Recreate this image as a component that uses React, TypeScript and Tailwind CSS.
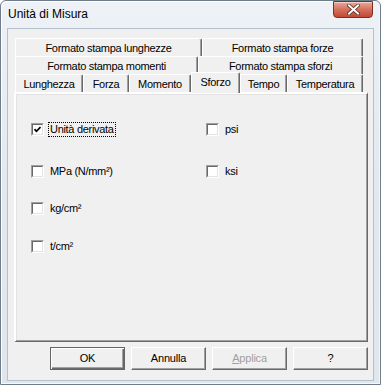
import React from "react";

const font = { fontFamily: '"Liberation Sans", Arial, sans-serif' };

interface TabProps {
  label: string;
  w: string;
  selected?: boolean;
}

function Tab({ label, w, selected }: TabProps) {
  if (selected) {
    return (
      <div
        className={`${w} relative z-10 -mt-[2px] h-[21px] self-start flex justify-center pt-[1px] bg-[#f0f0f0] border-l border-t border-white border-r border-r-[#696969] rounded-tr-[2px] shadow-[inset_-1px_0_0_#a0a0a0]`}
      >
        <span className="text-[11px] leading-[16px] tracking-[-0.3px] text-black">{label}</span>
      </div>
    );
  }
  return (
    <div
      className={`${w} h-full flex items-center justify-center bg-[#f0f0f0] border-l border-t border-white border-r border-r-[#696969] rounded-tr-[2px] shadow-[inset_-1px_0_0_#a0a0a0]`}
    >
      <span className="text-[11px] leading-[14px] tracking-[-0.3px] text-black">{label}</span>
    </div>
  );
}

function CheckBox({ label, checked, focused }: { label: string; checked?: boolean; focused?: boolean }) {
  return (
    <div className="flex items-center h-[13px]">
      <div className="w-[13px] h-[13px] border border-t-[#a0a0a0] border-l-[#a0a0a0] border-b-white border-r-white flex">
        <div className="flex-1 border border-t-[#696969] border-l-[#696969] border-b-[#e3e3e3] border-r-[#e3e3e3] bg-white flex items-center justify-center">
          {checked && (
            <svg width="7" height="7" viewBox="0 0 7 7">
              <path d="M0.5 3.2 L2.5 5.3 L6.5 1" fill="none" stroke="#000" strokeWidth="1.7" />
            </svg>
          )}
        </div>
      </div>
      <span
        className={`ml-[4px] px-[1px] h-[15px] flex items-center text-[11px] tracking-[-0.3px] text-black border border-dotted ${
          focused ? "border-black" : "border-transparent"
        }`}
      >
        {label}
      </span>
    </div>
  );
}

function DlgButton({ children, primary, disabled }: { children: React.ReactNode; primary?: boolean; disabled?: boolean }) {
  return (
    <button
      type="button"
      className={`w-[75px] h-[23px] bg-[#f0f0f0] text-[11px] tracking-[-0.2px] flex items-center justify-center ${
        primary
          ? "border border-[#646464] shadow-[inset_1px_1px_0_#ffffff,inset_-1px_-1px_0_#696969,inset_-2px_-2px_0_#a0a0a0]"
          : "border border-t-white border-l-white border-r-[#696969] border-b-[#696969] shadow-[inset_-1px_-1px_0_#a0a0a0]"
      } ${disabled ? "text-[#a0a0a0]" : "text-black"}`}
    >
      {children}
    </button>
  );
}

export default function App() {
  return (
    <div className="w-[381px] h-[385px] bg-white" style={font}>
      <div className="w-[381px] h-[385px] flex flex-col border border-[#6f7c8a] rounded-t-[6px] bg-gradient-to-b from-[#eef2f6] via-[#e2e8ee] to-[#dfe6ec] shadow-[inset_1px_1px_0_#ffffff,inset_-1px_-1px_0_#f4f8fb]">
        {/* title bar */}
        <div className="h-[27px] flex items-start justify-between pl-[7px] pr-[7px]">
          <span className="mt-[6px] text-[12px] leading-[14px] text-black">Unità di Misura</span>
          <div className="w-[40px] h-[17px] rounded-b-[4px] border border-[#7e2f22] bg-gradient-to-b from-[#e9ab9c] via-[#d4705d] to-[#c4462f] flex items-center justify-center shadow-[inset_0_1px_0_#f4cfc6]">
            <svg width="13" height="11" viewBox="0 0 13 11">
              <path d="M2 1.5 L11 9.5 M11 1.5 L2 9.5" stroke="#5a2a22" strokeWidth="3.6" strokeLinecap="square" />
              <path d="M2 1.5 L11 9.5 M11 1.5 L2 9.5" stroke="#ffffff" strokeWidth="2" strokeLinecap="square" />
            </svg>
          </div>
        </div>

        {/* client area */}
        <div className="flex-1 mx-[6px] mb-[3px] border border-[#b3c0cd] bg-[#f0f0f0] flex flex-col">
          <div className="flex-1 flex flex-col mt-[9px] ml-[6px] mr-[5px]">
            {/* tab rows */}
            <div className="flex h-[18px] ml-px">
              <Tab label="Formato stampa lunghezze" w="w-[187px]" />
              <Tab label="Formato stampa forze" w="w-[161px]" />
            </div>
            <div className="flex h-[18px] ml-px">
              <Tab label="Formato stampa momenti" w="w-[183px]" />
              <Tab label="Formato stampa sforzi" w="w-[165px]" />
            </div>
            <div className="flex h-[18px] ml-px">
              <Tab label="Lunghezza" w="w-[68px]" />
              <Tab label="Forza" w="w-[46px]" />
              <Tab label="Momento" w="w-[62px]" />
              <Tab label="Sforzo" w="w-[49px]" selected />
              <Tab label="Tempo" w="w-[47px]" />
              <Tab label="Temperatura" w="w-[76px]" />
            </div>

            {/* panel */}
            <div className="flex-1 border-l-2 border-t-2 border-l-white border-t-white border-r border-b border-r-[#696969] border-b-[#696969] shadow-[inset_-1px_-1px_0_#a0a0a0,inset_1px_1px_0_#e3e3e3] flex flex-col pl-[15px]">
              <div className="flex mt-[29px]">
                <div className="w-[175px]">
                  <CheckBox label="Unità derivata" checked focused />
                </div>
                <CheckBox label="psi" />
              </div>
              <div className="flex mt-[29px]">
                <div className="w-[175px]">
                  <CheckBox label="MPa (N/mm²)" />
                </div>
                <CheckBox label="ksi" />
              </div>
              <div className="flex mt-[24px]">
                <CheckBox label="kg/cm²" />
              </div>
              <div className="flex mt-[25px]">
                <CheckBox label="t/cm²" />
              </div>
            </div>

            {/* buttons */}
            <div className="flex justify-end gap-[6px] mt-[5px] mb-[10px]">
              <DlgButton primary>OK</DlgButton>
              <DlgButton>Annulla</DlgButton>
              <DlgButton disabled>
                <span>
                  <span className="underline">A</span>pplica
                </span>
              </DlgButton>
              <DlgButton>?</DlgButton>
            </div>
          </div>
        </div>
      </div>
    </div>
  );
}
